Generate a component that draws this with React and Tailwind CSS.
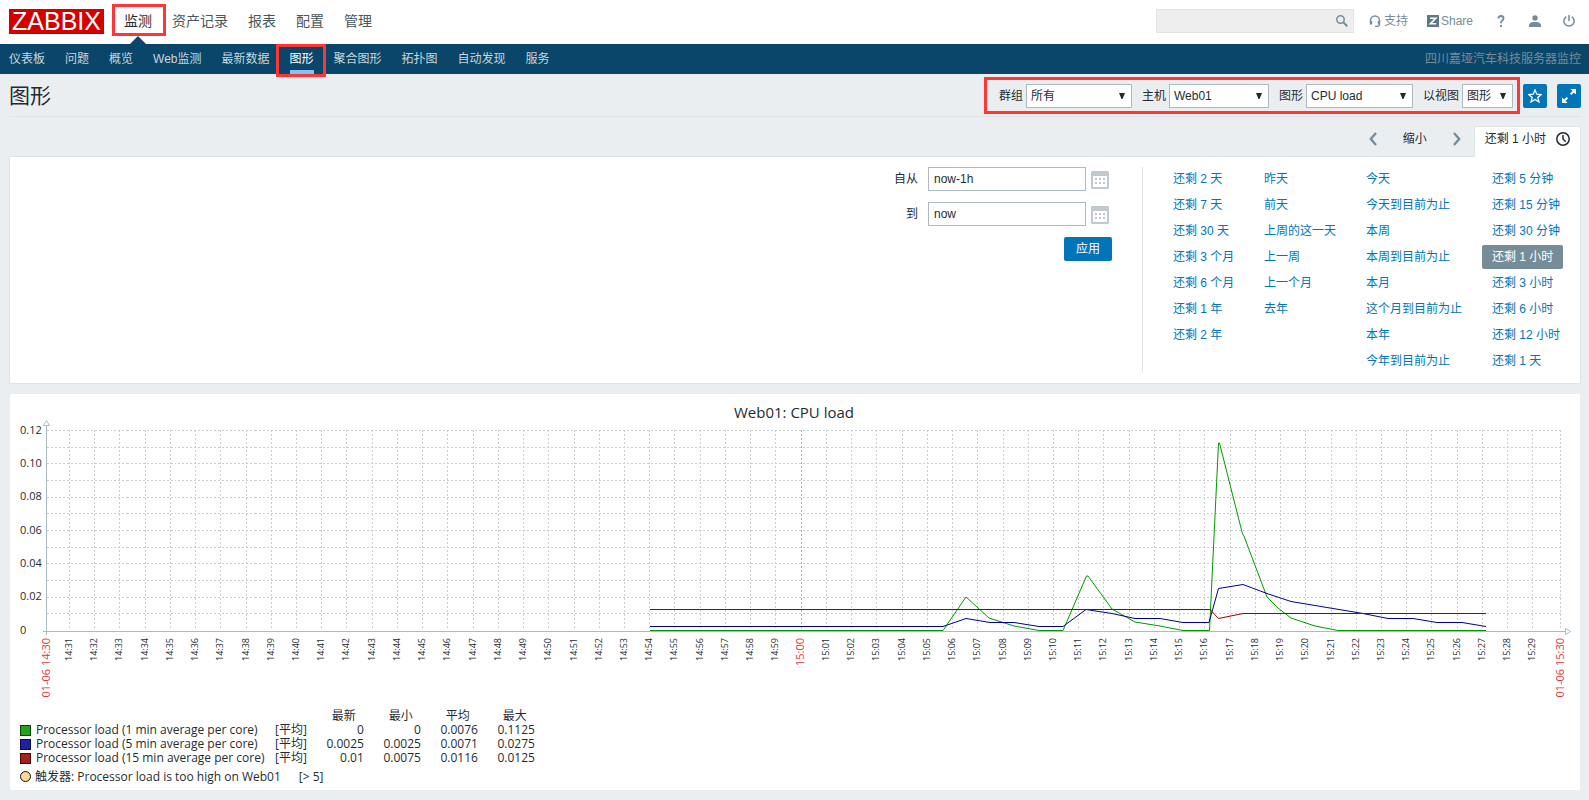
const MENU = ['监测', '资产记录', '报表', '配置', '管理'];
const SUBMENU = ['仪表板', '问题', '概览', 'Web监测', '最新数据', '图形', '聚合图形', '拓扑图', '自动发现', '服务'];

const RANGES = [
  ['还剩 2 天', '还剩 7 天', '还剩 30 天', '还剩 3 个月', '还剩 6 个月', '还剩 1 年', '还剩 2 年'],
  ['昨天', '前天', '上周的这一天', '上一周', '上一个月', '去年'],
  ['今天', '今天到目前为止', '本周', '本周到目前为止', '本月', '这个月到目前为止', '本年', '今年到目前为止'],
  ['还剩 5 分钟', '还剩 15 分钟', '还剩 30 分钟', '还剩 1 小时', '还剩 3 小时', '还剩 6 小时', '还剩 12 小时', '还剩 1 天'],
];

const SERIES = [
  {
    name: 'Processor load (1 min average per core)',
    fill: '#1fa51f',
    border: '#0b3d0b',
    values: ['0', '0', '0.0076', '0.1125'],
  },
  {
    name: 'Processor load (5 min average per core)',
    fill: '#1f1fa5',
    border: '#0b0b3d',
    values: ['0.0025', '0.0025', '0.0071', '0.0275'],
  },
  {
    name: 'Processor load (15 min average per core)',
    fill: '#a51f1f',
    border: '#3d0b0b',
    values: ['0.01', '0.0075', '0.0116', '0.0125'],
  },
];

const LINES = [
  {
    color: '#009900',
    points:
      '640,236.5 933,236.5 956,203 979,224 1004,232 1029,236.5 1053,236.5 1076.5,182 1078,182 1102,215 1125,228 1150,232 1173,236.5 1199.5,236.5 1208.5,49 1209.5,49 1232.5,140 1233.5,141 1257,203 1268,214 1281,224 1305,232 1328,236.5 1476,236.5',
  },
  {
    color: '#000099',
    points:
      '640,232.5 933,232.5 956,224.5 980,228.5 1004,228.5 1029,232.5 1053,232.5 1076,215.5 1102,219.5 1125,224.5 1150,224.5 1173,228.5 1199,228.5 1208.5,194.5 1233,190.5 1257,199.5 1281,207.5 1305,211.5 1329,215.5 1353,219.5 1378,224.5 1403,224.5 1427,228.5 1452,228.5 1476,232.5',
  },
  {
    color: '#990000',
    points: '640,215.5 1200,215.5 1208.5,224.5 1233,219.5 1476,219.5',
  },
];

/* Plot area inside the chart drawing */
const LEFT = 36.5;
const RIGHT = 1550.5;
const TOP = 36;
const HEIGHT = 200;
const minuteX = (m) => Math.floor(59.4 + (m - 1) * 25.233) + 0.5;
const label = (m) => {
  const h = 14 + Math.floor((30 + m) / 60);
  return `${h}:${String((30 + m) % 60).padStart(2, '0')}`;
};

function Chart() {
  const minutes = Array.from({ length: 59 }, (_, i) => i + 1);
  const rows = Array.from({ length: 12 }, (_, i) => i);
  return (
    <svg viewBox="0 0 1570 306" className="block h-auto w-full font-['Open_Sans']" role="img" aria-label="Web01: CPU load">
      <text x="784" y="24" fontSize="15" textAnchor="middle" fill="#1f2c33">
        Web01: CPU load
      </text>
      <g stroke="#c8d0d4" strokeDasharray="2 2" shapeRendering="crispEdges">
        {rows.map((i) => {
          const y = TOP + Math.floor((i * HEIGHT) / 12 + 0.4) + 0.5;
          return <line key={i} x1={LEFT} x2={RIGHT} y1={y} y2={y} />;
        })}
        {minutes.map((m) => (
          <line key={m} x1={minuteX(m)} x2={minuteX(m)} y1={TOP} y2={TOP + HEIGHT} stroke={m === 30 ? '#a0acb2' : undefined} />
        ))}
        <line x1={RIGHT} x2={RIGHT} y1={TOP} y2={TOP + HEIGHT} />
      </g>
      <g fill="none" stroke="#acbbc2">
        <path d="M36.5 31V241M33 237.5H1555" />
        <path d="M33.5 31.5H39.5L36.5 26.5ZM1555.5 234.5V240.5L1560.5 237.5Z" fill="#fff" />
      </g>
      <g fill="none" strokeWidth="1">
        {LINES.map((l) => (
          <polyline key={l.color} points={l.points} stroke={l.color} />
        ))}
      </g>
      <g fontSize="11" fill="#1f2c33">
        {['0.12', '0.10', '0.08', '0.06', '0.04', '0.02', '0'].map((t, i) => (
          <text key={t} x="10" y={40 + Math.floor((i * HEIGHT) / 6)}>
            {t}
          </text>
        ))}
      </g>
      <g fontSize="9" fill="#1f2c33">
        {minutes
          .filter((m) => m !== 30)
          .map((m) => (
            <text key={m} textAnchor="end" transform={`translate(${minuteX(m) + 2.5} 244) rotate(-90)`}>
              {label(m)}
            </text>
          ))}
      </g>
      <g fontSize="11" fill="#e33734" textAnchor="end">
        <text transform="translate(40 244) rotate(-90)">01-06 14:30</text>
        <text transform="translate(794 244) rotate(-90)">15:00</text>
        <text transform="translate(1554 244) rotate(-90)">01-06 15:30</text>
      </g>
    </svg>
  );
}

function Select({ id, text, value, width }) {
  return (
    <div className="flex items-center gap-[3px]">
      <label htmlFor={id}>{text}</label>
      <div className="relative">
        <select id={id} className={`block h-6 appearance-none border border-[#acbbc2] bg-white pr-5 pl-1 text-[#1f2c33] outline-none ${width}`}>
          <option>{value}</option>
        </select>
        <svg className="pointer-events-none absolute top-2 right-1.5 size-2" viewBox="0 0 8 8" fill="#1f2c33">
          <path d="M1 1H7L4.5 7H3.5Z" />
        </svg>
      </div>
    </div>
  );
}

function DateField({ id, text, value }) {
  return (
    <div className="flex items-center">
      <label htmlFor={id} className="w-10 pr-2.5 text-right">
        {text}
      </label>
      <input id={id} defaultValue={value} className="h-6 w-[158px] border border-[#acbbc2] bg-white px-[5px] outline-none" />
      <button type="button" aria-label={`${text} 日历`} className="ml-[5px] pt-0.5">
        <svg className="block size-[18px]" viewBox="0 0 18 18" fill="#c0cace">
          <path fillRule="evenodd" d="M1 0H17L18 1V17L17 18H1L0 17V1ZM2 5V16H16V5Z" />
          <path d="M4 7h2v2H4zM8 7h2v2H8zM12 7h2v2h-2zM4 11h2v2H4zM8 11h2v2H8zM12 11h2v2h-2z" />
        </svg>
      </button>
    </div>
  );
}

export default function App() {
  return (
    <div className="min-h-screen bg-[#ebeef0] pb-2.5 font-['Liberation_Sans','Noto_Sans_CJK_SC',sans-serif] text-xs text-[#1f2c33]">
      <header>
        <div className="flex h-11 items-center bg-white pr-2 pb-0.5 pl-[9px]">
          <a href="#home" className="mr-5 flex h-[25px] w-[95px] items-center justify-center bg-[#d40000] text-[25px] leading-none text-white">
            ZABBIX
          </a>
          <nav className="flex gap-5 text-sm text-[#48565d]">
            {MENU.map((m, i) => (
              <a key={m} href={`#menu-${i}`} className={i === 0 ? 'relative text-[#1f2c33]' : ''}>
                {m}
                {i === 0 && (
                  <>
                    <span className="absolute -top-[7px] -right-3.5 -left-3 h-8 border-3 border-[#ff3636]" />
                    <svg className="absolute top-[25px] left-1.5 h-2 w-4" viewBox="0 0 16 8" fill="#0a466a">
                      <path d="M0 8L8 0L16 8Z" />
                    </svg>
                  </>
                )}
              </a>
            ))}
          </nav>
          <div className="ml-auto flex items-center text-[#768d99]">
            <div className="flex h-6 w-[198px] items-center border border-[#e2e4e4] bg-[#eeeeee]">
              <input aria-label="搜索" className="h-full min-w-0 flex-1 bg-transparent px-1 outline-none" />
              <button type="button" aria-label="搜索" className="mr-[5px]">
                <svg className="block size-3" viewBox="0 0 12 12" fill="none" stroke="#768d99">
                  <circle cx="4.5" cy="4.5" r="3.7" strokeWidth="1.5" />
                  <path d="M7.5 7.5L11.3 11.3" strokeWidth="2" />
                </svg>
              </button>
            </div>
            <a href="#support" className="ml-[15px] flex items-center gap-[3px]">
              <svg className="size-3" viewBox="0 0 12 12" fill="none" stroke="#768d99" strokeWidth="1.5">
                <path d="M1.5 6.5V5.5A4.5 4.5 0 0 1 10.5 5.5V6.5" />
                <path d="M2 6V9.5M10 6V9.5" strokeWidth="2.4" />
                <path d="M10.4 9V10.2L9 11.3H6" strokeWidth="1.2" />
              </svg>
              支持
            </a>
            <a href="#share" className="ml-[19px] flex items-center gap-0.5">
              <svg className="size-3" viewBox="0 0 12 12">
                <rect width="12" height="12" rx="0.5" fill="#5f7783" />
                <path d="M3 3.2H8.8L3.4 8.8H9.2" fill="none" stroke="#fff" strokeWidth="1.6" />
              </svg>
              Share
            </a>
            <a href="#help" aria-label="帮助" className="ml-6 w-2">
              <svg className="h-3 w-2" viewBox="0 0 8 12" fill="none" stroke="#768d99" strokeWidth="1.9">
                <path d="M1.4 3.6Q1.4 1 3.9 1Q6.5 1 6.5 3.2Q6.5 4.6 5.2 5.5Q4 6.4 4 8.2M4 9.9V12" />
              </svg>
            </a>
            <a href="#profile" aria-label="用户" className="ml-6">
              <svg className="size-3" viewBox="0 0 12 12" fill="#768d99">
                <circle cx="6" cy="3" r="2.7" />
                <path d="M0 12V9.5Q1 7.3 4 7H8Q11 7.3 12 9.5V12Z" />
              </svg>
            </a>
            <a href="#logout" aria-label="退出" className="mr-1.5 ml-[22px]">
              <svg className="size-3" viewBox="0 0 12 12" fill="none" stroke="#768d99" strokeWidth="1.5">
                <path d="M3.3 1.6A5.1 5.1 0 1 0 8.7 1.6" />
                <path d="M6 0V6" />
              </svg>
            </a>
          </div>
        </div>
        <div className="flex h-[30px] items-center justify-between bg-[#0a466a] pr-2 pl-[9px] text-[#c8d5dc]">
          <nav className="flex gap-5">
            {SUBMENU.map((m) => (
              <a key={m} href={`#${m}`} className={m === '图形' ? 'relative text-white' : ''}>
                {m}
                {m === '图形' && (
                  <>
                    <span className="absolute inset-x-0 top-[19px] h-1 bg-[#80c3f5]" />
                    <span className="absolute -top-[7px] -right-3 -left-3.5 h-[33px] border-3 border-[#ff3636]" />
                  </>
                )}
              </a>
            ))}
          </nav>
          <span className="text-[#768d99]">四川嘉垭汽车科技服务器监控</span>
        </div>
      </header>

      <main className="pr-2 pl-[9px]">
        <div className="flex h-[43px] items-center justify-between border-b border-[#dfe4e7] pt-px">
          <h1 className="text-[21px]">图形</h1>
          <div className="flex items-center gap-[3px]">
            <form className="flex h-[37px] items-center gap-2.5 border-3 border-[#ff3636] pr-1 pl-3">
              <Select id="group" text="群组" value="所有" width="w-[106px]" />
              <Select id="host" text="主机" value="Web01" width="w-[100px]" />
              <Select id="graph" text="图形" value="CPU load" width="w-[107px]" />
              <Select id="view" text="以视图" value="图形" width="w-[51px]" />
            </form>
            <div className="flex gap-2.5">
              <button type="button" aria-label="收藏" className="flex size-6 items-center justify-center rounded-xs bg-[#0275b8]">
                <svg className="size-3.5" viewBox="0 0 14 14" fill="none" stroke="#fff" strokeWidth="1.3">
                  <path d="M7 1L8.8 5.2L13.3 5.5L9.8 8.4L11 12.9L7 10.4L3 12.9L4.2 8.4L0.7 5.5L5.2 5.2Z" />
                </svg>
              </button>
              <button type="button" aria-label="全屏" className="flex size-6 items-center justify-center rounded-xs bg-[#0275b8]">
                <svg className="size-3.5" viewBox="0 0 14 14" fill="#fff" stroke="#fff">
                  <path d="M8.5 0H14V5.5ZM0 8.5V14H5.5Z" stroke="none" />
                  <path d="M8.6 5.4L12 2M2 12L5.4 8.6" strokeWidth="2" />
                </svg>
              </button>
            </div>
          </div>
        </div>

        <div className="mt-[9px] flex items-stretch justify-end">
          <div className="flex items-center gap-[26px] pr-[13px] pb-1">
            <button type="button" aria-label="向前">
              <svg className="block h-3.5 w-2" viewBox="0 0 8 14" fill="none" stroke="#768d99" strokeWidth="2.4">
                <path d="M7 1L1.8 7L7 13" />
              </svg>
            </button>
            <button type="button">缩小</button>
            <button type="button" aria-label="向后">
              <svg className="block h-3.5 w-2" viewBox="0 0 8 14" fill="none" stroke="#768d99" strokeWidth="2.4">
                <path d="M1 1L6.2 7L1 13" />
              </svg>
            </button>
          </div>
          <button type="button" className="relative z-10 -mb-px flex h-[31px] items-center gap-2.5 border border-b-0 border-[#dfe4e7] bg-white px-2.5 pb-1.5">
            还剩 1 小时
            <svg className="size-3.5" viewBox="0 0 14 14" fill="none" stroke="#1f2c33" strokeWidth="1.5">
              <circle cx="7" cy="7" r="6.2" />
              <path d="M7 3V7L9.7 9.7" />
            </svg>
          </button>
        </div>

        <section className="flex justify-end border border-[#dfe4e7] bg-white py-2.5 pr-[17px]">
          <form className="mr-[33px] flex flex-col gap-[11px]">
            <DateField id="from" text="自从" value="now-1h" />
            <DateField id="to" text="到" value="now" />
            <button type="button" className="mr-[-3px] h-6 w-12 self-end rounded-xs bg-[#0275b8] text-white">
              应用
            </button>
          </form>
          <div className="flex border-l border-[#dfe4e7] pl-5">
            {RANGES.map((col, i) => (
              <ul key={i} className={['w-[91px]', 'w-[102px]', 'w-[126px]', 'w-[81px]'][i] + ' flex flex-col gap-0.5'}>
                {col.map((r) => (
                  <li key={r} className="flex">
                    <a
                      href="#range"
                      className={
                        'rounded-xs px-2.5 leading-6 whitespace-nowrap ' + (r === '还剩 1 小时' ? 'bg-[#768d99] text-white' : 'text-[#0275b8]')
                      }
                    >
                      {r}
                    </a>
                  </li>
                ))}
              </ul>
            ))}
          </div>
        </section>

        <section className="mx-px mt-2.5 bg-white pb-1.5 font-['Open_Sans','Noto_Sans_CJK_SC',sans-serif]">
          <Chart />
          <table className="mt-[9px] ml-2.5 text-[12px] leading-[14px]">
            <thead>
              <tr>
                <th className="w-[255px]" />
                <th className="w-[30px]" />
                {['最新', '最小', '平均', '最大'].map((h) => (
                  <th key={h} className="w-[57px] p-0 pr-2 text-right font-normal">
                    {h}
                  </th>
                ))}
              </tr>
            </thead>
            <tbody>
              {SERIES.map((s) => (
                <tr key={s.name}>
                  <td className="p-0">
                    <span className="flex items-center gap-[5px]">
                      <svg className="size-[11px]" viewBox="0 0 11 11">
                        <rect x="0.5" y="0.5" width="10" height="10" fill={s.fill} stroke={s.border} />
                      </svg>
                      {s.name}
                    </span>
                  </td>
                  <td className="p-0 whitespace-nowrap">[平均]</td>
                  {s.values.map((v, i) => (
                    <td key={i} className="p-0 text-right">
                      {v}
                    </td>
                  ))}
                </tr>
              ))}
            </tbody>
          </table>
          <div className="mt-1 ml-2.5 flex h-[15px] items-center gap-1">
            <svg className="size-[11px]" viewBox="0 0 11 11">
              <circle cx="5.5" cy="5.5" r="5" fill="#ffd98f" stroke="#111" />
            </svg>
            <span>触发器: Processor load is too high on Web01</span>
            <span className="ml-3.5">[&gt; 5]</span>
          </div>
        </section>
      </main>
    </div>
  );
}
